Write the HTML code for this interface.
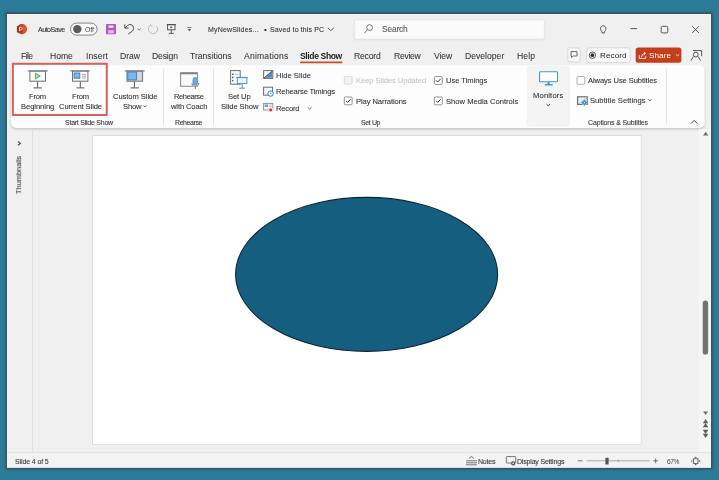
<!DOCTYPE html>
<html><head><meta charset="utf-8">
<style>
html,body{margin:0;padding:0;}
body{width:719px;height:480px;overflow:hidden;position:relative;background:#2c7c99;font-family:"Liberation Sans",sans-serif;}
.t{position:absolute;white-space:nowrap;line-height:20px;height:20px;will-change:transform;-webkit-text-stroke:0.08px currentColor;}
svg{position:absolute;left:0;top:0;}
</style></head><body>
<svg width="719" height="480" viewBox="0 0 719 480">
 <defs>
  <filter id="sh" x="-5%" y="-5%" width="110%" height="110%"><feGaussianBlur stdDeviation="0.9"/></filter>
  <filter id="sh2" x="-5%" y="-20%" width="110%" height="140%"><feGaussianBlur stdDeviation="1.1"/></filter>
 </defs>
 <!-- window shadow -->
 <rect x="5.4" y="12.2" width="707.2" height="457.3" fill="#33505c" filter="url(#sh)"/>
 <!-- window -->
 <rect x="7" y="14" width="704" height="453.5" fill="#f0f0f0"/>
 <rect x="7.5" y="14.5" width="703" height="452.5" fill="none" stroke="#f7f2f0" stroke-width="1"/>
 <!-- search box -->
 <rect x="354.7" y="20.2" width="189.8" height="19.2" rx="1.5" fill="#000" opacity="0.10" filter="url(#sh2)"/>
 <rect x="354.7" y="19.8" width="189.6" height="19.1" rx="1.5" fill="#fbfbfb" stroke="#e6e6e6" stroke-width="0.6"/>
 <!-- ribbon panel -->
 <rect x="11" y="67" width="693.7" height="62.2" rx="5" fill="#000" opacity="0.2" filter="url(#sh2)"/>
 <rect x="11" y="65.3" width="693.7" height="62.7" rx="5" fill="#fdfdfd"/>
 <!-- monitors group bg -->
 <rect x="527.3" y="66.4" width="42.3" height="59.3" rx="2" fill="#f4f4f4" stroke="#ececec" stroke-width="0.6"/>
 <!-- separators -->
 <g stroke="#dedede" stroke-width="0.9">
  <line x1="163.6" y1="68.7" x2="163.6" y2="124.6"/>
  <line x1="213.5" y1="68.7" x2="213.5" y2="124.6"/>
  <line x1="666.4" y1="68.7" x2="666.4" y2="124.6"/>
 </g>
 <!-- red highlight box -->
 <rect x="12.85" y="63.8" width="93.9" height="51.2" fill="none" stroke="#d95f5c" stroke-width="2"/>
 <!-- thumbnails separator -->
 <line x1="32.6" y1="129" x2="32.6" y2="452" stroke="#dcdcdc" stroke-width="0.9"/>
 <line x1="38.6" y1="129" x2="38.6" y2="452" stroke="#ececec" stroke-width="0.5"/>
 <rect x="698.6" y="129" width="12" height="323.5" fill="#f5f5f5"/>
 <!-- slide -->
 <rect x="92.2" y="135.2" width="549.3" height="309.4" fill="#d9d9d9"/>
 <rect x="93" y="136" width="547.8" height="307.9" fill="#ffffff"/>
 <!-- ellipse -->
 <ellipse cx="366.6" cy="274.4" rx="131" ry="77" fill="#165e80" stroke="#0a2634" stroke-width="1.1"/>
 <!-- status bar -->
 <rect x="7" y="452.5" width="704" height="15" fill="#f3f3f3"/>
 <line x1="7" y1="452.6" x2="711" y2="452.6" stroke="#dedede" stroke-width="0.9"/>
 <!-- tab underline -->
 <rect x="300" y="61.6" width="42.5" height="1.7" rx="0.85" fill="#c4502e"/>
  <!-- P logo -->
 <circle cx="21.9" cy="29.1" r="5.1" fill="#c2401f"/>
 <path d="M22.4 24.1 A5.1 5.1 0 0 1 22.4 34.1 Z" fill="#d9593a"/>
 <rect x="16.9" y="25.9" width="5.8" height="6.6" rx="0.6" fill="#a5341c"/>
 <path d="M19.6 31.2 V27.2 H20.9 Q22.2 27.2 22.2 28.6 Q22.2 30 20.9 30 H19.6" fill="none" stroke="#f6dcc6" stroke-width="1"/>
 <!-- toggle -->
 <rect x="70.5" y="23.1" width="26.6" height="12" rx="6" fill="#fafafa" stroke="#6a6a6a" stroke-width="0.8"/>
 <circle cx="77.3" cy="29.1" r="4.2" fill="#5a5a5a"/>
 <!-- save -->
 <rect x="106" y="24" width="10" height="10.2" rx="0.6" fill="#b058c6"/>
 <rect x="108.5" y="25.4" width="5" height="2.5" fill="#f4d2f9"/>
 <rect x="108.2" y="30.2" width="5.6" height="3.2" fill="#eab8f3"/>
 <!-- undo -->
 <path d="M124.8 24.4 V28.1 H128.6" fill="none" stroke="#4a4a4a" stroke-width="1"/>
 <path d="M124.9 28 L127.6 25.5 Q129.3 24.2 131.1 24.6 Q133.9 25.6 133.6 28.7 Q133.3 30.2 132.1 31.3 L128.3 34" fill="none" stroke="#4a4a4a" stroke-width="1"/>
 <path d="M137.6 28.6 L139.2 30 L140.8 28.6" fill="none" stroke="#555" stroke-width="0.8"/>
 <!-- redo (disabled) -->
 <path d="M156.6 26.2 A4.6 4.6 0 1 1 150.2 25.4" fill="none" stroke="#b4b4b4" stroke-width="0.9"/>
 <path d="M150.4 24 L150.6 25.6 L152.4 26" fill="none" stroke="#b4b4b4" stroke-width="0.9"/>
 <!-- presentation qat -->
 <rect x="166.8" y="24.1" width="9" height="1.1" fill="#4a4a4a"/>
 <rect x="167.6" y="24.6" width="7.4" height="5.2" fill="none" stroke="#4a4a4a" stroke-width="0.9"/>
 <path d="M170.4 26 L172.6 27.2 L170.4 28.4 Z" fill="#4a4a4a"/>
 <line x1="171.3" y1="29.8" x2="171.3" y2="33.2" stroke="#4a4a4a" stroke-width="0.9"/>
 <line x1="168.8" y1="33.4" x2="173.8" y2="33.4" stroke="#4a4a4a" stroke-width="0.9"/>
 <!-- customize qat -->
 <line x1="187.4" y1="27.5" x2="191.4" y2="27.5" stroke="#555" stroke-width="0.8"/>
 <path d="M187.6 29 L189.4 31.2 L191.2 29 Z" fill="#555"/>
 <!-- chevron title -->
 <path d="M327.8 27.8 L330.8 30.6 L333.8 27.8" fill="none" stroke="#444" stroke-width="0.9"/>
 <!-- search icon -->
 <circle cx="369.6" cy="27.6" r="2.9" fill="none" stroke="#666" stroke-width="0.9"/>
 <line x1="367.5" y1="29.7" x2="364.3" y2="33.2" stroke="#666" stroke-width="0.9"/>
 <!-- lightbulb -->
 <path d="M601.6 31.2 C599.8 29.6 600.2 25.8 603.2 25.8 C606.2 25.8 606.6 29.6 604.8 31.2 L604.2 33 H602.2 Z" fill="none" stroke="#444" stroke-width="0.9"/>
 <!-- window controls -->
 <line x1="630.4" y1="28.6" x2="637" y2="28.6" stroke="#444" stroke-width="0.9"/>
 <rect x="661.2" y="26.3" width="6.6" height="6.6" rx="1.2" fill="none" stroke="#444" stroke-width="0.9"/>
 <path d="M692.2 26.2 L699 33 M699 26.2 L692.2 33" stroke="#444" stroke-width="0.9"/>
 <!-- comment button -->
 <rect x="567.9" y="47.8" width="12.2" height="14" rx="2" fill="#fbfbfb" stroke="#cfcfcf" stroke-width="0.8"/>
 <path d="M571 51.6 H577 V56 H573.4 L571.6 57.6 V56 H571 Z" fill="none" stroke="#444" stroke-width="0.8"/>
 <!-- record button -->
 <rect x="586.7" y="47.8" width="43.6" height="14.8" rx="2.5" fill="#fbfbfb" stroke="#cfcfcf" stroke-width="0.8"/>
 <circle cx="592.4" cy="55.2" r="3.2" fill="none" stroke="#333" stroke-width="0.8"/>
 <circle cx="592.4" cy="55.2" r="1.9" fill="#333"/>
 <!-- share button -->
 <rect x="635.7" y="47.6" width="45.7" height="15.2" rx="2.5" fill="#c43e1c"/>
 <path d="M639.2 55.2 V58.4 H645.8 V56.2" fill="none" stroke="#fff" stroke-width="0.9"/>
 <path d="M641.4 57 Q641.8 53.6 645.2 53.4" fill="none" stroke="#fff" stroke-width="0.9"/>
 <path d="M643.8 52.2 L645.6 53.4 L643.8 54.8" fill="none" stroke="#fff" stroke-width="0.9"/>
 <path d="M676 54.4 L677.6 55.8 L679.2 54.4" fill="none" stroke="#fff" stroke-width="0.8"/>
 <!-- person/feedback icon -->
 <path d="M691 60.6 L693.4 56.6 M700.6 60.6 L698.2 56.6" stroke="#444" stroke-width="0.9"/>
 <circle cx="695.8" cy="54.6" r="2.4" fill="none" stroke="#444" stroke-width="0.9"/>
 <path d="M693 50.6 H701.6 V56.2" fill="none" stroke="#444" stroke-width="0.9"/>

 <!-- From Beginning icon -->
 <rect x="27.8" y="70.1" width="20" height="1.5" fill="#999"/>
 <rect x="29.9" y="71.2" width="15.6" height="10" fill="#fafafa" stroke="#707070" stroke-width="1"/>
 <path d="M35.4 73.1 L40.2 76.1 L35.4 79.1 Z" fill="#a6dcaa" stroke="#45a04e" stroke-width="0.8"/>
 <line x1="37.6" y1="81.5" x2="37.6" y2="87.6" stroke="#555" stroke-width="1"/>
 <line x1="33.5" y1="87.9" x2="41.9" y2="87.9" stroke="#555" stroke-width="1"/>
 <!-- From Current Slide icon -->
 <rect x="70.1" y="70.1" width="19.7" height="1.5" fill="#999"/>
 <rect x="72.5" y="71.2" width="15.4" height="10" fill="#fafafa" stroke="#707070" stroke-width="1"/>
 <rect x="74.1" y="73" width="5.7" height="5.2" fill="#7cb6ee" stroke="#3a78bd" stroke-width="0.9"/>
 <g stroke="#8a8a8a" stroke-width="0.7"><line x1="82" y1="74.4" x2="86" y2="74.4"/><line x1="82" y1="76.2" x2="86" y2="76.2"/><line x1="82" y1="78" x2="86" y2="78"/></g>
 <line x1="80.3" y1="81.5" x2="80.3" y2="87.6" stroke="#555" stroke-width="1"/>
 <line x1="76.2" y1="87.9" x2="84.4" y2="87.9" stroke="#555" stroke-width="1"/>
 <!-- Custom slide show icon -->
 <rect x="124.8" y="70.1" width="20" height="1.5" fill="#999"/>
 <rect x="127" y="71.2" width="15.6" height="10" fill="#d6d6d6" stroke="#707070" stroke-width="1"/>
 <rect x="127.8" y="72" width="8.6" height="7.9" fill="#7ab8f2" stroke="#3a7cc2" stroke-width="0.9"/>
 <line x1="134.4" y1="81.5" x2="134.4" y2="87.6" stroke="#555" stroke-width="1"/>
 <line x1="130.5" y1="87.9" x2="138.9" y2="87.9" stroke="#555" stroke-width="1"/>
 <!-- Rehearse with coach icon -->
 <rect x="180.6" y="72.7" width="16.8" height="13.6" fill="#fafafa" stroke="#858585" stroke-width="1"/>
 <rect x="180.6" y="72.7" width="16.8" height="1.6" fill="#858585"/>
 <path d="M191.6 82.6 A3.5 3.5 0 0 0 198.8 82.6" fill="none" stroke="#fff" stroke-width="2"/>
 <rect x="193" y="77.6" width="4.6" height="7.6" rx="2.3" fill="#6aaae6" stroke="#fff" stroke-width="1"/>
 <rect x="193" y="77.6" width="4.6" height="7.6" rx="2.3" fill="#6aaae6" stroke="#3a7cc2" stroke-width="0.7"/>
 <path d="M191.8 83 A3.4 3.4 0 0 0 198.8 83" fill="none" stroke="#555" stroke-width="0.7"/>
 <line x1="195.3" y1="86.4" x2="195.3" y2="89" stroke="#555" stroke-width="0.8"/>
 <!-- set up slide show icon -->
 <rect x="230.6" y="70.6" width="9.6" height="13.6" fill="#fafafa" stroke="#707070" stroke-width="1"/>
 <g fill="#555"><rect x="232" y="73.6" width="1.4" height="1.4"/><rect x="232" y="76.7" width="1.4" height="1.4"/><rect x="232" y="79.9" width="1.4" height="1.4"/></g>
 <g stroke="#9a9a9a" stroke-width="0.6"><line x1="234.6" y1="74.3" x2="238.4" y2="74.3"/></g>
 <rect x="236.1" y="76.9" width="11.7" height="1.2" fill="#5c8e9e"/>
 <rect x="237.3" y="77.6" width="9.6" height="6" fill="#e3f6fb" stroke="#5c8e9e" stroke-width="0.9"/>
 <line x1="242.2" y1="83.6" x2="242.2" y2="88" stroke="#5c8e9e" stroke-width="1"/>
 <line x1="239.4" y1="88.2" x2="245" y2="88.2" stroke="#5c8e9e" stroke-width="1"/>
 <!-- hide slide icon -->
 <rect x="263.6" y="70.6" width="9.2" height="7.8" fill="#fafafa" stroke="#6a6a6a" stroke-width="1"/>
 <path d="M264.2 77.8 L272.2 71.2 V77.8 Z" fill="#4a90d0"/>
 <line x1="264" y1="78" x2="272.4" y2="71" stroke="#333" stroke-width="0.8"/>
 <!-- rehearse timings icon -->
 <rect x="263.6" y="87.2" width="9" height="8" fill="#fafafa" stroke="#6a6a6a" stroke-width="1"/>
 <circle cx="270.6" cy="93.6" r="2.7" fill="#fff" stroke="#2f7fcc" stroke-width="1"/>
 <path d="M270.6 92.4 V93.8 H271.6" fill="none" stroke="#2f7fcc" stroke-width="0.6"/>
 <!-- record icon -->
 <rect x="263.6" y="103.4" width="9.2" height="6.6" fill="#fafafa" stroke="#8a8a8a" stroke-width="0.9"/>
 <rect x="264.6" y="104.4" width="3.6" height="2.6" fill="#6aa3d8"/>
 <g stroke="#9a9a9a" stroke-width="0.5"><line x1="269" y1="105" x2="272" y2="105"/><line x1="269" y1="106.6" x2="272" y2="106.6"/></g>
 <rect x="268.4" y="108" width="4.6" height="3.8" fill="#f5d5d5"/>
 <circle cx="270.7" cy="109.9" r="1.4" fill="#d13438"/>
 <path d="M307.8 107.4 L309.6 109 L311.4 107.4" fill="none" stroke="#444" stroke-width="0.8"/>
 <!-- checkboxes -->
 <rect x="344.3" y="76.4" width="7.8" height="7.8" rx="1" fill="#f2f2f2" stroke="#d6d6d6" stroke-width="0.8"/>
 <rect x="344.3" y="97" width="7.8" height="7.8" rx="1" fill="#fff" stroke="#7a7a7a" stroke-width="0.8"/>
 <path d="M346 100.8 L347.6 102.4 L350.6 99.2" fill="none" stroke="#333" stroke-width="1"/>
 <rect x="434.4" y="76.6" width="7.9" height="7.8" rx="1" fill="#fff" stroke="#7a7a7a" stroke-width="0.8"/>
 <path d="M436.1 80.4 L437.7 82 L440.7 78.8" fill="none" stroke="#333" stroke-width="1"/>
 <rect x="434.4" y="97" width="7.9" height="7.8" rx="1" fill="#fff" stroke="#7a7a7a" stroke-width="0.8"/>
 <path d="M436.1 100.8 L437.7 102.4 L440.7 99.2" fill="none" stroke="#333" stroke-width="1"/>
 <!-- monitor icon -->
 <rect x="539.6" y="71.7" width="17.9" height="10" rx="0.8" fill="#fff" stroke="#3d96d6" stroke-width="1.1"/>
 <rect x="547.6" y="81.8" width="2" height="2.8" fill="#3d96d6"/>
 <rect x="544.8" y="84.1" width="7.8" height="1.5" rx="0.5" fill="#3d96d6"/>
 <path d="M546.5 104.1 L548.3 105.8 L550.1 104.1" fill="none" stroke="#333" stroke-width="1"/>
 <!-- always use subtitles checkbox -->
 <rect x="577" y="76.5" width="7.8" height="7.8" rx="1" fill="#fff" stroke="#9a9a9a" stroke-width="0.8"/>
 <!-- subtitle settings icon -->
 <rect x="577.6" y="96.8" width="9.6" height="7.6" fill="#f0f0f0" stroke="#6e6e6e" stroke-width="1.2"/>
 <path d="M578.4 103.6 L586.4 97.6" stroke="#c8c8c8" stroke-width="0.8"/>
 <circle cx="584.4" cy="102.6" r="2.5" fill="#2a8fd0" stroke="#fff" stroke-width="0.5"/>
 <g stroke="#2a8fd0" stroke-width="0.9"><line x1="584.4" y1="99.4" x2="584.4" y2="105.8"/><line x1="581.2" y1="102.6" x2="587.6" y2="102.6"/></g>
 <circle cx="584.4" cy="102.6" r="0.8" fill="#cfe8fa"/>
 <path d="M648.6 99.4 L650 100.8 L651.4 99.4" fill="none" stroke="#333" stroke-width="0.9"/>
 <!-- collapse chevron -->
 <path d="M691 123.6 L694.2 120.4 L697.4 123.6" fill="none" stroke="#444" stroke-width="1"/>
 <!-- chevron custom slideshow -->
 <path d="M143.4 105.6 L145 107 L146.6 105.6" fill="none" stroke="#444" stroke-width="0.8"/>
 <!-- thumbnails pane chevron -->
 <path d="M17.9 141.5 L20.5 143.4 L17.9 145.3" fill="none" stroke="#555" stroke-width="1.2"/>
 <!-- scrollbar -->
 <path d="M703 135.4 L705.7 131.8 L708.4 135.4 Z" fill="#707070"/>
 <rect x="702.7" y="300.6" width="5.4" height="54" rx="2.7" fill="#737373"/>
 <path d="M703 411.4 L708.2 411.4 L705.6 415 Z" fill="#707070"/>
 <path d="M702.8 423.2 L705.6 419 L708.4 423.2 Z M702.8 427.2 L705.6 423 L708.4 427.2 Z" fill="#606060"/>
 <path d="M702.8 429.8 L708.4 429.8 L705.6 434 Z M702.8 433.8 L708.4 433.8 L705.6 438 Z" fill="#606060"/>
 <!-- notes icon -->
 <path d="M468.8 458.6 L471.4 456.4 L474 458.6" fill="none" stroke="#555" stroke-width="0.8"/>
 <g stroke="#555" stroke-width="0.8"><line x1="466" y1="460.8" x2="477" y2="460.8"/><line x1="466" y1="462.8" x2="477" y2="462.8"/><line x1="466" y1="464.8" x2="477" y2="464.8"/></g>
 <!-- display settings icon -->
 <rect x="506.3" y="456.6" width="9.4" height="6.4" rx="0.6" fill="none" stroke="#555" stroke-width="0.8"/>
 <circle cx="513.2" cy="463.4" r="2.1" fill="#555"/>
 <circle cx="513.2" cy="463.4" r="0.8" fill="#f3f3f3"/>
 <!-- zoom slider -->
 <line x1="577.8" y1="460.8" x2="582.6" y2="460.8" stroke="#555" stroke-width="0.8"/>
 <line x1="586.6" y1="460.8" x2="649.8" y2="460.8" stroke="#8a8a8a" stroke-width="0.7"/>
 <rect x="605.4" y="457.7" width="3.2" height="6.8" rx="0.5" fill="#555"/>
 <line x1="618.3" y1="459.4" x2="618.3" y2="462.2" stroke="#8a8a8a" stroke-width="0.6"/>
 <path d="M653.3 460.8 H658 M655.65 458.4 V463.2" stroke="#555" stroke-width="0.8"/>
 <!-- fit icon -->
 <rect x="693.4" y="458.8" width="4.6" height="4.6" fill="none" stroke="#555" stroke-width="0.9"/>
 <g fill="#555"><path d="M695.7 456.6 L694.6 458 H696.8 Z"/><path d="M695.7 465.4 L694.6 464 H696.8 Z"/><path d="M690.8 461.1 L692.2 460 V462.2 Z"/><path d="M700.6 461.1 L699.2 460 V462.2 Z"/></g>

</svg>
<div class="t" style="left:37.90px;top:20px;font-size:7.00px;letter-spacing:-0.465px;color:#303030;font-weight:400;">AutoSave</div>
<div class="t" style="left:84.50px;top:20px;font-size:7.00px;letter-spacing:-0.154px;color:#444;font-weight:400;-webkit-text-stroke:0;">Off</div>
<div class="t" style="left:207.80px;top:20px;font-size:7.00px;letter-spacing:0.182px;color:#303030;font-weight:400;">MyNewSlides...</div>
<div class="t" style="left:263.60px;top:20px;font-size:8.00px;letter-spacing:0.199px;color:#303030;font-weight:400;">&bull;</div>
<div class="t" style="left:270.10px;top:20px;font-size:7.00px;letter-spacing:0.131px;color:#303030;font-weight:400;">Saved to this PC</div>
<div class="t" style="left:381.60px;top:19px;font-size:8.40px;letter-spacing:-0.163px;color:#555;font-weight:400;">Search</div>
<div class="t" style="left:20.80px;top:46px;font-size:8.60px;letter-spacing:-0.586px;color:#333;font-weight:400;-webkit-text-stroke:0.06px currentColor;">File</div>
<div class="t" style="left:50.00px;top:46px;font-size:8.60px;letter-spacing:-0.013px;color:#333;font-weight:400;-webkit-text-stroke:0.06px currentColor;">Home</div>
<div class="t" style="left:85.70px;top:46px;font-size:8.60px;letter-spacing:0.099px;color:#333;font-weight:400;-webkit-text-stroke:0.06px currentColor;">Insert</div>
<div class="t" style="left:120.00px;top:46px;font-size:8.60px;letter-spacing:-0.023px;color:#333;font-weight:400;-webkit-text-stroke:0.06px currentColor;">Draw</div>
<div class="t" style="left:152.30px;top:46px;font-size:8.60px;letter-spacing:-0.154px;color:#333;font-weight:400;-webkit-text-stroke:0.06px currentColor;">Design</div>
<div class="t" style="left:190.00px;top:46px;font-size:8.60px;letter-spacing:-0.004px;color:#333;font-weight:400;-webkit-text-stroke:0.06px currentColor;">Transitions</div>
<div class="t" style="left:244.00px;top:46px;font-size:8.60px;letter-spacing:0.196px;color:#333;font-weight:400;-webkit-text-stroke:0.06px currentColor;">Animations</div>
<div class="t" style="left:354.30px;top:46px;font-size:8.60px;letter-spacing:-0.204px;color:#333;font-weight:400;-webkit-text-stroke:0.06px currentColor;">Record</div>
<div class="t" style="left:394.30px;top:46px;font-size:8.60px;letter-spacing:-0.299px;color:#333;font-weight:400;-webkit-text-stroke:0.06px currentColor;">Review</div>
<div class="t" style="left:434.00px;top:46px;font-size:8.60px;letter-spacing:-0.062px;color:#333;font-weight:400;-webkit-text-stroke:0.06px currentColor;">View</div>
<div class="t" style="left:465.00px;top:46px;font-size:8.60px;letter-spacing:0.013px;color:#333;font-weight:400;-webkit-text-stroke:0.06px currentColor;">Developer</div>
<div class="t" style="left:516.60px;top:46px;font-size:8.60px;letter-spacing:0.105px;color:#333;font-weight:400;-webkit-text-stroke:0.06px currentColor;">Help</div>
<div class="t" style="left:300.00px;top:46px;font-size:8.60px;letter-spacing:-0.397px;color:#222;font-weight:700;-webkit-text-stroke:0;">Slide Show</div>
<div class="t" style="left:599.80px;top:46px;font-size:8.10px;letter-spacing:0.078px;color:#222;font-weight:400;-webkit-text-stroke:0;">Record</div>
<div class="t" style="left:649.10px;top:46px;font-size:8.10px;letter-spacing:0.097px;color:#ffffff;font-weight:400;-webkit-text-stroke:0;">Share</div>
<div class="t" style="left:29.40px;top:87px;font-size:7.60px;letter-spacing:-0.243px;color:#303030;font-weight:400;">From</div>
<div class="t" style="left:21.10px;top:97px;font-size:7.60px;letter-spacing:-0.063px;color:#303030;font-weight:400;">Beginning</div>
<div class="t" style="left:72.00px;top:87px;font-size:7.60px;letter-spacing:-0.243px;color:#303030;font-weight:400;">From</div>
<div class="t" style="left:58.90px;top:97px;font-size:7.60px;letter-spacing:-0.104px;color:#303030;font-weight:400;">Current Slide</div>
<div class="t" style="left:64.90px;top:113px;font-size:7.00px;letter-spacing:-0.243px;color:#333;font-weight:400;">Start Slide Show</div>
<div class="t" style="left:112.50px;top:87px;font-size:7.60px;letter-spacing:-0.063px;color:#303030;font-weight:400;">Custom Slide</div>
<div class="t" style="left:122.50px;top:97px;font-size:7.60px;letter-spacing:-0.170px;color:#303030;font-weight:400;">Show</div>
<div class="t" style="left:173.90px;top:87px;font-size:7.60px;letter-spacing:-0.422px;color:#303030;font-weight:400;">Rehearse</div>
<div class="t" style="left:170.60px;top:97px;font-size:7.60px;letter-spacing:-0.122px;color:#303030;font-weight:400;">with Coach</div>
<div class="t" style="left:174.60px;top:113px;font-size:7.00px;letter-spacing:-0.421px;color:#333;font-weight:400;">Rehearse</div>
<div class="t" style="left:228.00px;top:87px;font-size:7.60px;letter-spacing:-0.107px;color:#303030;font-weight:400;">Set Up</div>
<div class="t" style="left:220.50px;top:97px;font-size:7.60px;letter-spacing:-0.069px;color:#303030;font-weight:400;">Slide Show</div>
<div class="t" style="left:276.00px;top:66px;font-size:7.60px;letter-spacing:0.029px;color:#303030;font-weight:400;">Hide Slide</div>
<div class="t" style="left:276.00px;top:82px;font-size:7.60px;letter-spacing:-0.143px;color:#303030;font-weight:400;">Rehearse Timings</div>
<div class="t" style="left:276.00px;top:99px;font-size:7.60px;letter-spacing:-0.200px;color:#303030;font-weight:400;">Record</div>
<div class="t" style="left:355.90px;top:71px;font-size:7.60px;letter-spacing:-0.067px;color:#c4c4c4;font-weight:400;">Keep Slides Updated</div>
<div class="t" style="left:355.90px;top:92px;font-size:7.60px;letter-spacing:-0.089px;color:#303030;font-weight:400;">Play Narrations</div>
<div class="t" style="left:445.70px;top:71px;font-size:7.60px;letter-spacing:-0.051px;color:#303030;font-weight:400;">Use Timings</div>
<div class="t" style="left:445.70px;top:92px;font-size:7.60px;letter-spacing:0.004px;color:#303030;font-weight:400;">Show Media Controls</div>
<div class="t" style="left:360.80px;top:113px;font-size:7.00px;letter-spacing:-0.380px;color:#333;font-weight:400;">Set Up</div>
<div class="t" style="left:533.10px;top:86px;font-size:7.60px;letter-spacing:0.166px;color:#303030;font-weight:400;">Monitors</div>
<div class="t" style="left:588.10px;top:71px;font-size:7.60px;letter-spacing:-0.093px;color:#303030;font-weight:400;">Always Use Subtitles</div>
<div class="t" style="left:590.20px;top:91px;font-size:7.60px;letter-spacing:0.043px;color:#303030;font-weight:400;">Subtitle Settings</div>
<div class="t" style="left:587.80px;top:113px;font-size:7.00px;letter-spacing:-0.154px;color:#333;font-weight:400;">Captions &amp; Subtitles</div>
<div class="t" style="left:14.50px;top:452px;font-size:7.00px;letter-spacing:-0.120px;color:#333;font-weight:400;">Slide 4 of 5</div>
<div class="t" style="left:477.70px;top:452px;font-size:7.00px;letter-spacing:-0.196px;color:#333;font-weight:400;">Notes</div>
<div class="t" style="left:516.90px;top:452px;font-size:7.00px;letter-spacing:-0.186px;color:#333;font-weight:400;">Display Settings</div>
<div class="t" style="left:666.90px;top:452px;font-size:6.60px;letter-spacing:-0.455px;color:#444;font-weight:400;-webkit-text-stroke:0;">67%</div>
<div class="t" style="left:-0.02px;top:164.85px;width:38.3px;font-size:7.41px;color:#3a3a3a;transform:rotate(-90deg);transform-origin:50% 50%;">Thumbnails</div>
</body></html>
